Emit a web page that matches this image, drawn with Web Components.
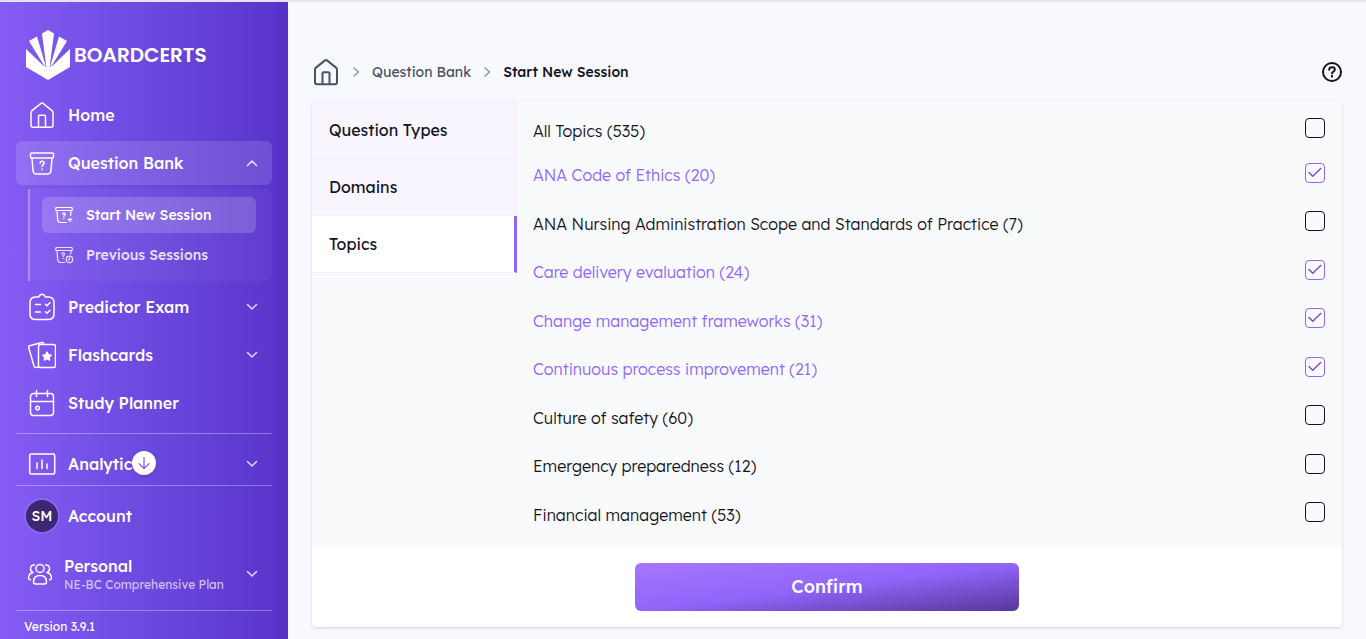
<!DOCTYPE html>
<html lang="en">
<head>
<meta charset="utf-8">
<meta name="viewport" content="width=device-width, initial-scale=1">
<title>BoardCerts – Start New Session</title>
<style>
  html, body { margin: 0; }
  body { font-family: Lexend, Inter, "Open Sans", sans-serif; font-size: 16px; line-height: 24px; color: #14141f; background: #f8f9fe; }
</style>
</head>
<body>
<bc-app></bc-app>
<script>
const ICONS = {
  logo: ['0 0 44 50', '<g fill="currentColor"><path d="M22 0l6 3.500L23.800 36h-3.600L16 3.500z"/><path d="M3 11l8-4.500L19.600 35.500l-1.400.3z"/><path d="M41 11l-8-4.500L24.400 35.500l1.400.3z"/><path d="M0 19l18 17.200h8l18-17.200V37L22 50 0 37z"/></g>'],
  home: ['0 0 28 28', '<path d="M14 2a1.500 1.500 0 0 1 1 .4l9 7.200q1 .8 1 2v12.700q0 2-2 2H5q-2 0-2-2V11.600q0-1.200 1-2l9-7.200a1.500 1.500 0 0 1 1-.4zM10.500 26.200v-11q0-1 1-1h5q1 0 1 1v11"/>'],
  bank: ['0 0 28 28', '<path d="M3.500 4h21q1 0 1 1v3q0 1-1 1h-21q-1 0-1-1V5q0-1 1-1zM4 9l1 12.500Q5.300 25 9 25h10q3.700 0 4-3.500L24 9M12.200 14.200q0-2 1.900-2t1.900 1.800q0 1.200-1 1.800t-1 1.700M14 20v.5"/>'],
  banknew: ['0 0 20 20', '<path d="M2.500 2.500h15q.7 0 .7.7V5.500h-16.400V3.200q0-.7.7-.7zM3 5.500l.6 9q.3 3 3 3H12.500M17 5.500l-.3 5M8.600 9.200q0-1.300 1.300-1.300t1.300 1.200q0 .8-.7 1.200t-.6 1.100M9.900 13v.5M16 13v3.500M14.200 14.700h3.600"/>'],
  bankold: ['0 0 20 20', '<path d="M2.500 2.500h15q.7 0 .7.7V5.500h-16.400V3.200q0-.7.7-.7zM3 5.500l.6 9q.3 3 3 3H10.500M17 5.500l-.3 3.500M7.900 9.200q0-1.300 1.300-1.300t1.300 1.200q0 .8-.7 1.200t-.6 1.100M9.200 13v.5"/><circle cx="15.400" cy="14.400" r="3.200"/><path d="M15.400 12.700v1.800l-1 .6"/>'],
  exam: ['0 0 28 28', '<path d="M10.500 4H7.500Q2 4.300 2 9.500v11.200Q2 26.500 8 26.500h12q6 0 6-5.800V9.500Q26 4.300 20.500 4h-3L16 2q-2-1.500-4 0zM7.500 11.500h5M7.500 19h5M17.500 11.200l1.500 1.500 3-3M17.500 18.800l1.500 1.500 3-3"/>'],
  cards: ['0 0 28 28', '<rect x="10.500" y="3.500" width="17" height="23" rx="2"/><path d="M10.500 26L7.500 26.500q-1 0-1.400-1.200L.6 6.500Q.4 5.200 1.600 4.700L14 1.600q1.500-.2 1.900 1.700"/><path fill="currentColor" d="M19 11.200l1.300 2.600 2.800.4-2 2 .5 2.800-2.600-1.300-2.600 1.300.5-2.800-2-2 2.800-.4z"/>'],
  planner: ['0 0 28 28', '<rect x="2.500" y="4.500" width="23" height="22" rx="3"/><path d="M2.500 12.500h23M8.500 1.500v6M19.500 1.500v6"/><circle cx="9.500" cy="19" r="1.800"/>'],
  chart: ['0 0 28 28', '<rect x="1.700" y="4" width="25" height="20" rx="1.500"/><path d="M9 13v5.500M14 10v8.500M19 14v4.500"/>'],
  people: ['0 0 28 28', '<circle cx="14" cy="8.500" r="4"/><path d="M7.500 22q0-6.500 6.500-6.500t6.500 6.500q0 2-2 2h-9q-2 0-2-2zM8.500 5Q4.500 4.500 4.500 8.800q0 2.900 2.500 3.700-4.500 1-4.500 6 0 1.200 2 1.200M19.500 5q4-.5 4 3.800 0 2.900-2.500 3.700 4.500 1 4.500 6 0 1.200-2 1.200"/>'],
  down: ['0 0 12 12', '<path d="M1.500 3.500L6 8l4.500-4.500"/>'],
  up: ['0 0 12 12', '<path d="M1.500 8.500L6 4l4.500 4.500"/>'],
  right: ['0 0 12 12', '<path d="M4 2l4.500 4L4 10"/>'],
  arrow: ['0 0 16 16', '<path d="M8 2.500v11M3 8.700l5 5 5-5"/>'],
  help: ['0 0 22 22', '<circle cx="11" cy="11" r="9"/><path d="M8.200 8.700q0-2.400 2.800-2.400t2.800 2.200q0 1.400-1.400 2.100T11 12.300M11 14.800v.9"/>'],
  check: ['0 0 20 20', '<path d="M4 9.500l3.700 3.800L15.700 5.500"/>']
};

const define = (name, css, html, setup) => {
  const template = document.createElement('template');
  template.innerHTML = `<style>*{box-sizing:border-box}button{font:inherit;color:inherit;background:none;border:0;padding:0;text-align:left;cursor:pointer}a{color:inherit;text-decoration:none}${css}</style>${html}`;
  customElements.define(name, class extends HTMLElement {
    connectedCallback() {
      if (this.shadowRoot) return;
      const root = this.attachShadow({ mode: 'open' });
      root.append(template.content.cloneNode(true));
      if (setup) setup(this, root);
    }
  });
};

define('bc-icon',
  ':host{display:block;flex:none;width:28px;height:28px}svg{display:block;width:100%;height:100%;fill:none;stroke:currentColor;stroke-width:var(--stroke,1.5);stroke-linecap:round;stroke-linejoin:round}',
  '<svg aria-hidden="true"></svg>',
  (host, root) => {
    const name = host.getAttribute('name');
    const [box, body] = ICONS[name];
    const svg = root.querySelector('svg');
    svg.setAttribute('viewBox', box);
    svg.innerHTML = body;
    if (name === 'logo') svg.style.stroke = 'none';
  });

define('bc-nav-item', `
  :host{display:block}
  .item{display:flex;align-items:center;gap:12px;width:100%;min-height:44px;padding:0 12px;border-radius:6px;font-size:16px;font-weight:500;color:#fff}
  :host([active]) .item{background:rgba(255,255,255,.13)}
  .text{flex:1}
  .chev{width:12px;height:12px;margin-right:2px;opacity:.8}
  ::slotted(small){display:block;font-size:12px;line-height:16px;font-weight:400;color:#cfc0f7}
  :host([compact]) .item{gap:10px;padding-left:10px;min-height:48px;line-height:22px}`,
  '', (host, root) => {
    const icon = host.getAttribute('icon');
    const menu = host.getAttribute('menu');
    const el = document.createElement(menu ? 'button' : 'a');
    el.className = 'item';
    if (menu) el.setAttribute('aria-expanded', menu === 'up');
    else el.href = '#';
    el.innerHTML = (icon ? `<bc-icon name="${icon}"></bc-icon>` : '<slot name="icon"></slot>')
      + '<span class="text"><slot></slot></span>'
      + (menu ? `<bc-icon class="chev" name="${menu}"></bc-icon>` : '');
    root.append(el);
  });

define('bc-sub-item', `
  :host{display:block}
  a{display:flex;align-items:center;gap:12px;height:36px;padding:0 12px;border-radius:6px;font-size:14px;font-weight:500;color:#e9e1fd}
  :host([active]) a{background:rgba(255,255,255,.17);color:#fff}
  bc-icon{width:20px;height:20px;--stroke:1.2}`,
  '', (host, root) => {
    const link = document.createElement('a');
    link.href = '#';
    link.innerHTML = `<bc-icon name="${host.getAttribute('icon')}"></bc-icon><slot></slot>`;
    root.append(link);
  });

define('bc-sidebar', `
  :host{display:flex;flex-direction:column;flex:none;width:288px;padding:0 16px;color:#fff;background:linear-gradient(90deg,#865cf5 0%,#7350e5 35%,#5a36cd 94%,#5530c8 100%)}
  .brand{display:flex;align-items:center;gap:4px;height:91px;padding:14px 10px 0;font-family:Poppins,Lexend,Inter,sans-serif;font-size:20px;font-weight:600}
  .brand bc-icon{width:44px;height:50px}
  nav{display:flex;flex-direction:column;gap:4px}
  .sub{display:flex;flex-direction:column;gap:4px;margin-left:12px;padding:8px 16px 8px 12px;border-left:2px solid #a98ff5;border-radius:0 8px 8px 0;background:rgba(255,255,255,.04)}
  .group{display:flex;flex-direction:column;border-top:1px solid rgba(255,255,255,.32)}
  .stats{position:relative;height:52px;margin-top:8px;padding-top:8px}
  .account{gap:12px;padding:8px 0 12px}
  .more{position:absolute;left:116px;top:17px;display:grid;place-items:center;width:24px;height:24px;border-radius:50%;background:#fff;color:#7a50ea;box-shadow:0 1px 3px rgba(0,0,0,.2)}
  .more bc-icon{width:16px;height:16px;--stroke:1.2}
  .avatar{display:grid;place-items:center;width:36px;height:36px;margin:0 -4px;border:2px solid #8a63f7;border-radius:50%;background:#3b2870;font-size:14px;font-weight:500}
  .version{padding:8px 8px 0;font-size:12px;line-height:16px;font-weight:400}`,
  `<div class="brand"><bc-icon name="logo"></bc-icon><span>BOARDCERTS</span></div>
  <nav aria-label="Main">
    <bc-nav-item icon="home">Home</bc-nav-item>
    <bc-nav-item icon="bank" menu="up" active>Question Bank</bc-nav-item>
    <div class="sub">
      <bc-sub-item icon="banknew" active>Start New Session</bc-sub-item>
      <bc-sub-item icon="bankold">Previous Sessions</bc-sub-item>
    </div>
    <bc-nav-item icon="exam" menu="down">Predictor Exam</bc-nav-item>
    <bc-nav-item icon="cards" menu="down">Flashcards</bc-nav-item>
    <bc-nav-item icon="planner">Study Planner</bc-nav-item>
  </nav>
  <div class="group stats">
    <bc-nav-item icon="chart" menu="down">Analytic</bc-nav-item>
    <button class="more" aria-label="Scroll down"><bc-icon name="arrow"></bc-icon></button>
  </div>
  <div class="group account">
    <bc-nav-item><span class="avatar" slot="icon">SM</span>Account</bc-nav-item>
    <bc-nav-item icon="people" menu="down" compact>Personal<small>NE-BC Comprehensive Plan</small></bc-nav-item>
  </div>
  <div class="group version">Version 3.9.1</div>`);

define('bc-breadcrumb', `
  :host{display:flex;align-items:center;justify-content:space-between;height:28px;font-size:14px}
  nav{display:flex;align-items:center;gap:10px;color:#4a5264;font-weight:400}
  .home{--stroke:2}
  .sep{width:12px;height:12px;color:#8b95a7}
  b{font-weight:500;color:#12131f}
  button{color:#14141f;--stroke:2}
  .help{width:22px;height:22px}`,
  `<nav aria-label="Breadcrumb"><a href="#" aria-label="Home"><bc-icon class="home" name="home"></bc-icon></a><bc-icon class="sep" name="right"></bc-icon><a href="#">Question Bank</a><bc-icon class="sep" name="right"></bc-icon><b>Start New Session</b></nav>
  <button aria-label="Help"><bc-icon class="help" name="help"></bc-icon></button>`);

define('bc-tab', `
  :host{display:block}
  button{display:block;width:100%;height:57px;padding:0 17px;border-right:3px solid #f5f3fb;border-bottom:1px solid #f3f1f9;background:#f8f5ff;font-size:16px;font-weight:400}
  :host([active]) button{background:#fff;border-right-color:#9065fa}`,
  '<button role="tab"><slot></slot></button>',
  (host, root) => root.querySelector('button').setAttribute('aria-selected', host.hasAttribute('active')));

define('bc-topic', `
  :host{display:block;font-weight:300}
  label{display:flex;align-items:center;justify-content:space-between;height:100%;cursor:pointer}
  .box{display:grid;width:20px;height:20px;margin-bottom:5px}
  input,bc-icon{grid-area:1/1;width:20px;height:20px;margin:0}
  input{appearance:none;border:1px solid #14141f;border-radius:4px;background:transparent}
  bc-icon{visibility:hidden;color:#7443d8;pointer-events:none;--stroke:1.3}
  input:checked{border-color:#9065fa}
  input:checked+bc-icon{visibility:visible}
  label:has(:checked){color:#9065fa}`,
  '<label><slot></slot><span class="box"><input type="checkbox"><bc-icon name="check"></bc-icon></span></label>',
  (host, root) => { root.querySelector('input').checked = host.hasAttribute('checked'); });

define('bc-session-card', `
  :host{display:flex;flex-direction:column;flex:1;background:#fff;border-radius:4px;box-shadow:0 1px 3px rgba(20,20,50,.16)}
  .body{display:flex;flex:1;background:#f9fafc}
  .tabs{flex:none;width:205px}
  .topics{display:flex;flex-direction:column;flex:1;padding:8px 17px 8px 16px}
  .all{height:41px}
  .list{display:grid;flex:1;grid-auto-rows:1fr}
  footer{display:flex;justify-content:center;padding:16px}
  footer button{width:384px;height:48px;border-radius:6px;text-align:center;font-size:18px;font-weight:500;color:#fff;background:linear-gradient(to bottom right,#a876fb 0%,#9065fa 50%,#57379a 100%)}`,
  `<div class="body">
    <div class="tabs" role="tablist"><bc-tab>Question Types</bc-tab><bc-tab>Domains</bc-tab><bc-tab active>Topics</bc-tab></div>
    <div class="topics">
      <bc-topic class="all">All Topics (535)</bc-topic>
      <div class="list">
        <bc-topic checked>ANA Code of Ethics (20)</bc-topic>
        <bc-topic>ANA Nursing Administration Scope and Standards of Practice (7)</bc-topic>
        <bc-topic checked>Care delivery evaluation (24)</bc-topic>
        <bc-topic checked>Change management frameworks (31)</bc-topic>
        <bc-topic checked>Continuous process improvement (21)</bc-topic>
        <bc-topic>Culture of safety (60)</bc-topic>
        <bc-topic>Emergency preparedness (12)</bc-topic>
        <bc-topic>Financial management (53)</bc-topic>
      </div>
    </div>
  </div>
  <footer><button>Confirm</button></footer>`);

define('bc-app', `
  :host{display:flex;box-sizing:border-box;min-height:100vh;border-top:2px solid #e4e5ec}
  main{display:flex;flex-direction:column;flex:1;gap:16px;padding:56px 24px 12px}
  bc-breadcrumb{margin-right:-1px}`,
  '<bc-sidebar></bc-sidebar><main><bc-breadcrumb></bc-breadcrumb><bc-session-card></bc-session-card></main>');
</script>
</body>
</html>
